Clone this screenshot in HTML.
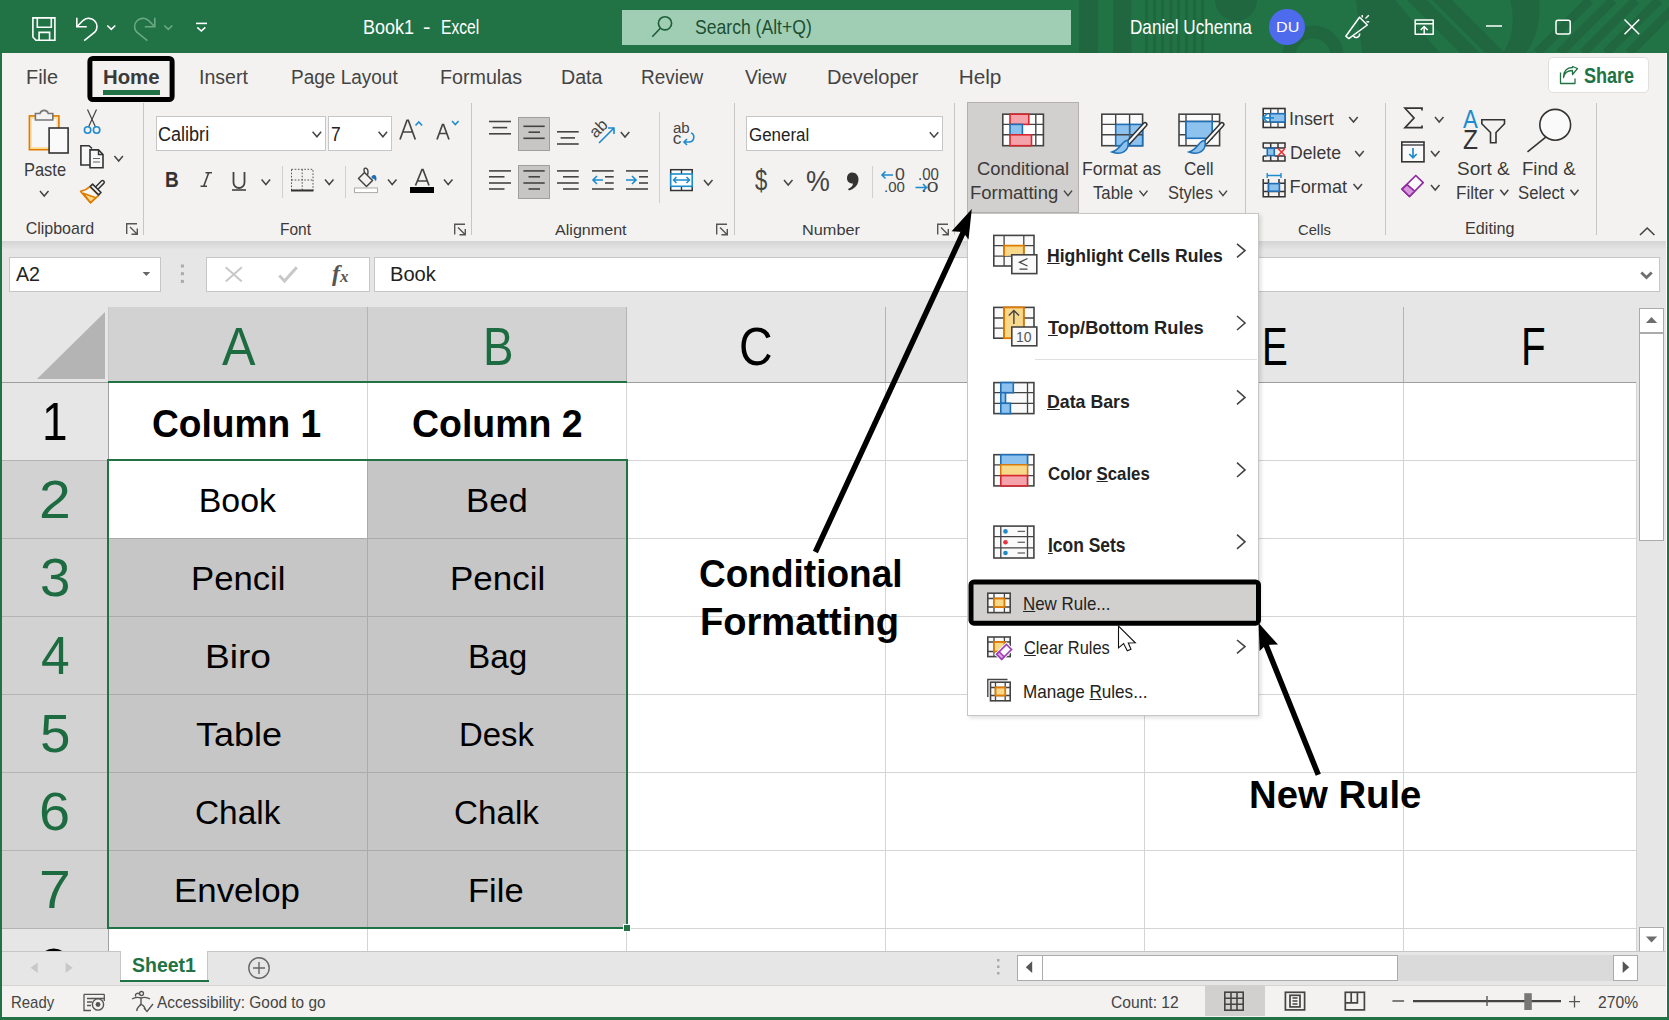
<!DOCTYPE html>
<html><head><meta charset="utf-8"><style>
html,body{margin:0;padding:0;}
body{width:1669px;height:1020px;position:relative;overflow:hidden;background:#fff;font-family:"Liberation Sans",sans-serif;}
.t{position:absolute;line-height:1;white-space:pre;transform-origin:0 0;}
svg{position:absolute;overflow:visible;}
</style></head><body>
<div style="position:absolute;left:0px;top:0px;width:1669px;height:53px;background:#217346"></div>
<div style="position:absolute;left:2px;top:53px;width:1664px;height:188px;background:#f3f2f1"></div>
<div style="position:absolute;left:2px;top:241px;width:1664px;height:9px;background:linear-gradient(#d4d4d4,#e6e6e6)"></div>
<div style="position:absolute;left:2px;top:250px;width:1664px;height:57px;background:#e6e6e6"></div>
<div style="position:absolute;left:9px;top:257px;width:152px;height:35px;background:#fff;border:1px solid #c6c6c6;box-sizing:border-box"></div>
<div style="position:absolute;left:206px;top:257px;width:164px;height:35px;background:#fff;border:1px solid #c6c6c6;box-sizing:border-box"></div>
<div style="position:absolute;left:374px;top:257px;width:1286px;height:35px;background:#fff;border:1px solid #c6c6c6;box-sizing:border-box"></div>
<div style="position:absolute;left:2px;top:307px;width:1664px;height:75px;background:#e6e6e6"></div>
<div style="position:absolute;left:108px;top:307px;width:519px;height:75px;background:#d2d2d2"></div>
<div style="position:absolute;left:2px;top:382px;width:1634px;height:569px;background:#fff"></div>
<div style="position:absolute;left:2px;top:382px;width:106px;height:569px;background:#e6e6e6"></div>
<div style="position:absolute;left:2px;top:460px;width:106px;height:468px;background:#d2d2d2"></div>
<div style="position:absolute;left:108px;top:460px;width:519px;height:468px;background:#c6c6c6"></div>
<div style="position:absolute;left:108px;top:460px;width:259px;height:78px;background:#fff"></div>
<div style="position:absolute;left:367px;top:307px;width:1px;height:75px;background:#b4b4b4"></div>
<div style="position:absolute;left:626px;top:307px;width:1px;height:75px;background:#b4b4b4"></div>
<div style="position:absolute;left:885px;top:307px;width:1px;height:75px;background:#b4b4b4"></div>
<div style="position:absolute;left:1144px;top:307px;width:1px;height:75px;background:#b4b4b4"></div>
<div style="position:absolute;left:1403px;top:307px;width:1px;height:75px;background:#b4b4b4"></div>
<div style="position:absolute;left:108px;top:307px;width:1px;height:75px;background:#c8c8c8"></div>
<div style="position:absolute;left:2px;top:382px;width:1634px;height:1px;background:#9e9e9e"></div>
<div style="position:absolute;left:108px;top:381px;width:519px;height:2px;background:#217346"></div>
<div style="position:absolute;left:367px;top:383px;width:1px;height:568px;background:#d4d4d4"></div>
<div style="position:absolute;left:626px;top:383px;width:1px;height:568px;background:#d4d4d4"></div>
<div style="position:absolute;left:885px;top:383px;width:1px;height:568px;background:#d4d4d4"></div>
<div style="position:absolute;left:1144px;top:383px;width:1px;height:568px;background:#d4d4d4"></div>
<div style="position:absolute;left:1403px;top:383px;width:1px;height:568px;background:#d4d4d4"></div>
<div style="position:absolute;left:1636px;top:382px;width:1px;height:569px;background:#d4d4d4"></div>
<div style="position:absolute;left:108px;top:383px;width:1px;height:568px;background:#a0a0a0"></div>
<div style="position:absolute;left:108px;top:460px;width:1528px;height:1px;background:#d4d4d4"></div>
<div style="position:absolute;left:2px;top:460px;width:106px;height:1px;background:#b4b4b4"></div>
<div style="position:absolute;left:108px;top:538px;width:1528px;height:1px;background:#d4d4d4"></div>
<div style="position:absolute;left:2px;top:538px;width:106px;height:1px;background:#b4b4b4"></div>
<div style="position:absolute;left:108px;top:616px;width:1528px;height:1px;background:#d4d4d4"></div>
<div style="position:absolute;left:2px;top:616px;width:106px;height:1px;background:#b4b4b4"></div>
<div style="position:absolute;left:108px;top:694px;width:1528px;height:1px;background:#d4d4d4"></div>
<div style="position:absolute;left:2px;top:694px;width:106px;height:1px;background:#b4b4b4"></div>
<div style="position:absolute;left:108px;top:772px;width:1528px;height:1px;background:#d4d4d4"></div>
<div style="position:absolute;left:2px;top:772px;width:106px;height:1px;background:#b4b4b4"></div>
<div style="position:absolute;left:108px;top:850px;width:1528px;height:1px;background:#d4d4d4"></div>
<div style="position:absolute;left:2px;top:850px;width:106px;height:1px;background:#b4b4b4"></div>
<div style="position:absolute;left:108px;top:928px;width:1528px;height:1px;background:#d4d4d4"></div>
<div style="position:absolute;left:2px;top:928px;width:106px;height:1px;background:#b4b4b4"></div>
<div style="position:absolute;left:109px;top:538px;width:517px;height:1px;background:#ababab"></div>
<div style="position:absolute;left:109px;top:616px;width:517px;height:1px;background:#ababab"></div>
<div style="position:absolute;left:109px;top:694px;width:517px;height:1px;background:#ababab"></div>
<div style="position:absolute;left:109px;top:772px;width:517px;height:1px;background:#ababab"></div>
<div style="position:absolute;left:109px;top:850px;width:517px;height:1px;background:#ababab"></div>
<div style="position:absolute;left:367px;top:461px;width:1px;height:466px;background:#ababab"></div>
<div style="position:absolute;left:107px;top:459px;width:521px;height:2px;background:#217346"></div>
<div style="position:absolute;left:107px;top:927px;width:521px;height:2px;background:#217346"></div>
<div style="position:absolute;left:107px;top:459px;width:2px;height:470px;background:#217346"></div>
<div style="position:absolute;left:626px;top:459px;width:2px;height:470px;background:#217346"></div>
<div style="position:absolute;left:623px;top:924px;width:6px;height:6px;background:#217346;border:1px solid #fff"></div>
<svg style="left:0;top:0" width="1669" height="1020"><polygon points="37,379 105,312 105,379" fill="#b4b4b4"/></svg>
<div style="position:absolute;left:1637px;top:307px;width:29px;height:644px;background:#e6e6e6"></div>
<div style="position:absolute;left:1639px;top:308px;width:25px;height:25px;background:#fff;border:1px solid #ababab;box-sizing:border-box"></div>
<div style="position:absolute;left:1639px;top:333px;width:25px;height:208px;background:#fff;border:1px solid #ababab;box-sizing:border-box"></div>
<div style="position:absolute;left:1639px;top:927px;width:25px;height:25px;background:#fff;border:1px solid #ababab;box-sizing:border-box"></div>
<div style="position:absolute;left:2px;top:951px;width:1664px;height:34px;background:#e6e6e6;border-top:1px solid #c6c6c6;box-sizing:border-box"></div>
<div style="position:absolute;left:120px;top:951px;width:88px;height:31px;background:#fff;border:1px solid #c6c6c6;border-top:none;box-sizing:border-box"></div>
<div style="position:absolute;left:120px;top:980px;width:89px;height:2px;background:#217346"></div>
<div style="position:absolute;left:2px;top:985px;width:1664px;height:32px;background:#f3f2f1;border-top:1px solid #d4d4d4;box-sizing:border-box"></div>
<div style="position:absolute;left:1017px;top:955px;width:621px;height:26px;background:#dadada"></div>
<div style="position:absolute;left:1017px;top:955px;width:26px;height:26px;background:#fff;border:1px solid #ababab;box-sizing:border-box"></div>
<div style="position:absolute;left:1042px;top:955px;width:356px;height:26px;background:#fff;border:1px solid #ababab;box-sizing:border-box"></div>
<div style="position:absolute;left:1613px;top:955px;width:25px;height:26px;background:#fff;border:1px solid #ababab;box-sizing:border-box"></div>
<div style="position:absolute;left:1205px;top:985px;width:60px;height:31px;background:#d2d0ce"></div>
<div style="position:absolute;left:0px;top:53px;width:2px;height:967px;background:#217346"></div>
<div style="position:absolute;left:1667px;top:53px;width:2px;height:967px;background:#217346"></div>
<div style="position:absolute;left:0px;top:1017px;width:1669px;height:3px;background:#217346"></div>
<svg style="left:0;top:0;overflow:hidden" width="1669" height="53"><rect x="1079" y="0" width="19" height="53" fill="#206740"/><rect x="1113" y="0" width="18.5" height="53" fill="#206740"/><rect x="1145.0" y="0" width="3" height="53" fill="#206740"/><rect x="1153.0" y="0" width="3" height="53" fill="#206740"/><rect x="1161.0" y="0" width="3" height="53" fill="#206740"/><rect x="1169.5" y="0" width="3" height="53" fill="#206740"/><rect x="1177.0" y="0" width="3" height="53" fill="#206740"/><rect x="1185.0" y="0" width="3" height="53" fill="#206740"/><rect x="1193.0" y="0" width="3" height="53" fill="#206740"/><rect x="1201.0" y="0" width="3" height="53" fill="#206740"/><path d="M1215,0 A21,21 0 0 0 1257,0 Z" fill="#206740"/><circle cx="1313" cy="56" r="24" fill="none" stroke="#206740" stroke-width="13"/><g stroke="#206740" stroke-width="14"><line x1="1412" y1="-5" x2="1475" y2="58"/><line x1="1437" y1="-5" x2="1500" y2="58"/></g><path d="M1356,0 H1395 L1440,53 H1362 Z" fill="#206740"/><g stroke="#206740" stroke-width="9"><line x1="1590" y1="0" x2="1537" y2="53"/><line x1="1613" y1="0" x2="1560" y2="53"/><line x1="1636" y1="0" x2="1583" y2="53"/><line x1="1659" y1="0" x2="1606" y2="53"/><line x1="1682" y1="0" x2="1629" y2="53"/></g><path d="M1510,0 H1539 C1541,18 1537,38 1526,53 H1503 C1513,38 1515,18 1510,0 Z" fill="#206740"/></svg>
<div style="position:absolute;left:622px;top:10px;width:449px;height:35px;background:#a0ceb4"></div>
<svg style="left:0;top:0" width="1" height="1"><g fill="none" stroke="#1d5e39" stroke-width="1.6"><circle cx="665" cy="23.3" r="6.6"/><line x1="660.3" y1="28.3" x2="652.3" y2="36.8"/></g></svg>
<svg style="left:0;top:0" width="1" height="1"><g fill="none" stroke="#fff" stroke-width="1.6" stroke-linejoin="miter"><path d="M32.9,17.9 H54.9 V40.2 H35.9 L32.9,37 Z"/><path d="M37.3,17.9 V27.2 H51.3 V17.9"/><path d="M39.1,40.2 V32.4 H49.6 V40.2"/><path d="M76.8,17.7 V26.8 H86.8"/><path d="M77.3,26.3 L83.3,20.3 A8.3,8.3 0 0 1 95,32 L84.2,40.6"/><path d="M107.3,25.5 L111.3,29.3 L115.3,25.5"/><path d="M196,23.4 H207"/><path d="M197.3,27.3 L201.3,31 L205.3,27.3"/></g><g fill="none" stroke="#6aa985" stroke-width="1.6"><path d="M154.8,17.7 V26.8 H144.8"/><path d="M154.3,26.3 L148.3,20.3 A8.3,8.3 0 0 0 136.6,32 L147.4,40.6"/><path d="M164.3,25.5 L168.3,29.3 L172.3,25.5"/></g></svg>
<svg style="left:0;top:0" width="1" height="1"><circle cx="1287" cy="27" r="18" fill="#4f6bed"/></svg>
<svg style="left:0;top:0" width="1" height="1"><g fill="none" stroke="#fff" stroke-width="1.5" stroke-linejoin="round"><path d="M1345.8,36.2 L1359.5,17.2 L1367.3,25 L1348.8,38.6 Z"/><path d="M1353.5,36 A3.3,3.3 0 0 0 1359.5,33.5"/><path d="M1362.2,15 V17.5"/><path d="M1365.5,18.5 L1368.8,15.3"/><path d="M1366.5,21.8 H1369.2"/><rect x="1415.2" y="20" width="18" height="14.2"/><line x1="1415.2" y1="23.8" x2="1433.2" y2="23.8"/><path d="M1424.2,34 V27"/><path d="M1420.7,30 L1424.2,26.5 L1427.7,30"/><line x1="1486" y1="26" x2="1502" y2="26"/><rect x="1556" y="20.2" width="14.2" height="13.8" rx="2"/><path d="M1624.5,19.5 L1639.2,34.3 M1639.2,19.5 L1624.5,34.3"/></g></svg>
<svg style="left:0;top:0" width="1" height="1"><path fill-rule="evenodd" fill="#000" d="M92.9,56.0 H169.1 A5.5,5.5 0 0 1 174.6,61.5 V96.5 A5.5,5.5 0 0 1 169.1,102.0 H92.9 A5.5,5.5 0 0 1 87.4,96.5 V61.5 A5.5,5.5 0 0 1 92.9,56.0 Z M92.4,61.0 H169.6 V97.0 H92.4 Z"/></svg>
<div style="position:absolute;left:103px;top:90px;width:57px;height:5px;background:#217346"></div>
<div style="position:absolute;left:1548px;top:57px;width:101px;height:36px;background:#fff;border:1px solid #e1dfdd;border-radius:5px;box-sizing:border-box"></div>
<svg style="left:0;top:0" width="1" height="1"><g fill="none" stroke="#217346" stroke-width="1.3" stroke-linejoin="round"><path d="M1560.5,72.5 V83.5 H1575 V78.5"/><path d="M1563.5,77.5 C1564.5,72.5 1568,70.5 1572.5,70.5 V74.5 L1577.5,68.5 L1572.5,66.5 V67.5 C1567,67.5 1563.7,71 1563.5,77.5 Z"/></g></svg>
<div style="position:absolute;left:143px;top:103px;width:1px;height:132px;background:#c8c6c4"></div>
<div style="position:absolute;left:471px;top:103px;width:1px;height:132px;background:#c8c6c4"></div>
<div style="position:absolute;left:734px;top:103px;width:1px;height:132px;background:#c8c6c4"></div>
<div style="position:absolute;left:954px;top:103px;width:1px;height:132px;background:#c8c6c4"></div>
<div style="position:absolute;left:1245px;top:103px;width:1px;height:132px;background:#c8c6c4"></div>
<div style="position:absolute;left:1385px;top:103px;width:1px;height:132px;background:#c8c6c4"></div>
<div style="position:absolute;left:1596px;top:103px;width:1px;height:132px;background:#c8c6c4"></div>
<div style="position:absolute;left:282px;top:166px;width:1px;height:32px;background:#d2d0ce"></div>
<div style="position:absolute;left:345px;top:166px;width:1px;height:32px;background:#d2d0ce"></div>
<div style="position:absolute;left:659px;top:112px;width:1px;height:91px;background:#d2d0ce"></div>
<div style="position:absolute;left:872px;top:166px;width:1px;height:32px;background:#d2d0ce"></div>
<svg style="left:0;top:0" width="1" height="1"><g fill="none" stroke="#555" stroke-width="1.4"><path d="M126.7,234.0 V223.7 H137.0"/><path d="M130.0,227.0 L136.5,233.5 M131.5,234.3 H137.3 V228.5"/></g><g fill="none" stroke="#555" stroke-width="1.4"><path d="M454.7,234.5 V224.2 H465.0"/><path d="M458.0,227.5 L464.5,234.0 M459.5,234.8 H465.3 V229.0"/></g><g fill="none" stroke="#555" stroke-width="1.4"><path d="M716.7,234.5 V224.2 H727.0"/><path d="M720.0,227.5 L726.5,234.0 M721.5,234.8 H727.3 V229.0"/></g><g fill="none" stroke="#555" stroke-width="1.4"><path d="M937.7,234.5 V224.2 H948.0"/><path d="M941.0,227.5 L947.5,234.0 M942.5,234.8 H948.3 V229.0"/></g></svg>
<svg style="left:0;top:0" width="1" height="1"><path d="M1640,235 L1647.2,228 L1654.4,235" fill="none" stroke="#444" stroke-width="1.6"/></svg>
<svg style="left:0;top:0" width="1" height="1"><rect x="29.4" y="115.9" width="29.5" height="33.8" fill="#fbe3a6" stroke="#e07b00" stroke-width="1.6"/><rect x="32" y="119" width="24.5" height="28" fill="#f7f7f7"/><path d="M35.4,120 V113.5 H40 A4.3,4.3 0 0 1 48.3,113.5 H52.8 V120 Z" fill="#f3f3f3" stroke="#777" stroke-width="1.6"/><rect x="49.1" y="128" width="19" height="25" fill="#fafafa" stroke="#333" stroke-width="1.6"/><path d="M40.0,191.1 L44.2,196.1 L48.5,191.1" fill="none" stroke="#444" stroke-width="1.5"/><g fill="none" stroke="#444" stroke-width="1.2"><path d="M87.5,109.5 L95.5,127"/><path d="M96.5,109.5 L88.5,127"/></g><g fill="none" stroke="#1e8bcd" stroke-width="1.6"><circle cx="87.6" cy="130" r="3.2"/><circle cx="96.6" cy="130" r="3.2"/></g><path d="M90.5,165 H80.9 V145.7 H89 L92,148.5" fill="#f7f7f7" stroke="#333" stroke-width="1.6"/><path d="M90,149.9 H98.5 L103,154.5 V167.8 H90 Z" fill="#f7f7f7" stroke="#333" stroke-width="1.6"/><path d="M98.5,150 V154.5 H103" fill="none" stroke="#333" stroke-width="1.4"/><path d="M93,158.5 H100 M93,162 H100" stroke="#666" stroke-width="1.2"/><path d="M114.4,156.0 L118.7,161.0 L122.9,156.0" fill="none" stroke="#444" stroke-width="1.5"/><path d="M80.6,191.4 Q86.5,190 89.9,186.6 L98.6,195.3 L90.4,202.8 Z" fill="#f7f7f7" stroke="#e07b00" stroke-width="1.6" stroke-linejoin="round"/><path d="M83.3,193.2 L95.8,197.8 L90.4,202.6 Z" fill="#f8d98b" stroke="#e07b00" stroke-width="1.5" stroke-linejoin="round"/><path d="M96.2,188.6 L102.6,182.2" stroke="#333" stroke-width="4.8" stroke-linecap="round"/><path d="M96.2,188.6 L102.6,182.2" stroke="#f7f7f7" stroke-width="1.8" stroke-linecap="round"/><path d="M90.2,186.5 L92.6,184.1 L101,192.5 L98.6,194.9 Z" fill="#f7f7f7" stroke="#333" stroke-width="1.6" stroke-linejoin="round"/></svg>
<div style="position:absolute;left:156px;top:116px;width:170px;height:35px;background:#fff;border:1px solid #c6c6c6;box-sizing:border-box"></div>
<div style="position:absolute;left:328px;top:116px;width:64px;height:35px;background:#fff;border:1px solid #c6c6c6;box-sizing:border-box"></div>
<div style="position:absolute;left:746px;top:116px;width:197px;height:35px;background:#fff;border:1px solid #c6c6c6;box-sizing:border-box"></div>
<svg style="left:0;top:0" width="1" height="1"><path d="M312.6,131.8 L316.9,136.8 L321.1,131.8" fill="none" stroke="#444" stroke-width="1.5"/><path d="M378.6,131.8 L382.9,136.8 L387.1,131.8" fill="none" stroke="#444" stroke-width="1.5"/><path d="M929.8,132.2 L934.0,137.2 L938.3,132.2" fill="none" stroke="#444" stroke-width="1.5"/><g fill="none" stroke="#444" stroke-width="1.7"><path d="M400,139.5 L407,120.3 H408.3 L415.3,139.5 M403,132 H412.5"/><path d="M437,139.5 L442.5,124.5 H443.5 L449,139.5 M439.3,133.5 H446.8"/></g><path d="M415.5,125.5 L418.8,122 L422.1,125.5" fill="none" stroke="#1e8bcd" stroke-width="1.6"/><path d="M452,121 L455.3,124.5 L458.6,121" fill="none" stroke="#1e8bcd" stroke-width="1.6"/></svg>
<div class="t" style="left:165.16px;top:168.54px;font-size:21.80px;color:#333;font-weight:700;transform:scaleX(0.8722);">B</div>
<svg style="left:0;top:0" width="1" height="1"><path d="M205.5,172.8 H212 M200.5,186.3 H207 M208.7,172.8 L203.7,186.3" fill="none" stroke="#444" stroke-width="1.6"/></svg>
<svg style="left:0;top:0" width="1" height="1"><path d="M233.5,172 V182.5 A5.5,5.5 0 0 0 244.5,182.5 V172" fill="none" stroke="#444" stroke-width="1.8"/><line x1="232" y1="190" x2="246" y2="190" stroke="#444" stroke-width="1.6"/><path d="M261.6,179.5 L265.9,184.5 L270.1,179.5" fill="none" stroke="#444" stroke-width="1.5"/><path d="M325.0,179.5 L329.2,184.5 L333.5,179.5" fill="none" stroke="#444" stroke-width="1.5"/><path d="M388.0,179.5 L392.2,184.5 L396.5,179.5" fill="none" stroke="#444" stroke-width="1.5"/><path d="M444.0,179.5 L448.2,184.5 L452.5,179.5" fill="none" stroke="#444" stroke-width="1.5"/><g fill="none" stroke="#555" stroke-width="1" stroke-dasharray="1.6,1.6"><rect x="291.5" y="169.3" width="21.5" height="21"/><line x1="302.2" y1="169.3" x2="302.2" y2="190"/><line x1="291.5" y1="180" x2="313" y2="180"/></g><line x1="291" y1="190.5" x2="313.5" y2="190.5" stroke="#333" stroke-width="2"/><path d="M358.5,178.5 L364.5,172.5 L372.5,180.5 L366.5,186.5 Z" fill="none" stroke="#444" stroke-width="1.5" stroke-linejoin="round"/><path d="M364.5,172.5 C363.5,169.5 364,167.8 366,168.2 C368,168.6 368.5,171.5 367.5,175" fill="none" stroke="#444" stroke-width="1.4"/><path d="M371.5,176.5 C373.5,174 376.5,174.5 376.5,178.5 L376,181.5 C375,179.5 373.5,178.3 371.8,178.5 Z" fill="#1e6fb5"/><rect x="354.5" y="188" width="23" height="4.6" fill="#fff" stroke="#aaa" stroke-width="1"/><path d="M415.5,185.5 L422,169.5 H423 L429,185.5 M417.8,181 H426.8" fill="none" stroke="#444" stroke-width="1.7"/><rect x="410" y="187" width="24" height="6" fill="#000"/></svg>
<div style="position:absolute;left:518px;top:117px;width:32px;height:34px;background:#c8c6c4;border:1px solid #a19f9d;box-sizing:border-box"></div>
<div style="position:absolute;left:518px;top:165px;width:32px;height:34px;background:#c8c6c4;border:1px solid #a19f9d;box-sizing:border-box"></div>
<svg style="left:0;top:0" width="1" height="1"><line x1="489.0" y1="121.5" x2="511.0" y2="121.5" stroke="#444" stroke-width="1.6"/><line x1="492.6" y1="127.6" x2="507.2" y2="127.6" stroke="#444" stroke-width="1.6"/><line x1="489.0" y1="133.8" x2="511.0" y2="133.8" stroke="#444" stroke-width="1.6"/><line x1="523.4" y1="126.3" x2="544.7" y2="126.3" stroke="#444" stroke-width="1.6"/><line x1="528.5" y1="132.2" x2="540.0" y2="132.2" stroke="#444" stroke-width="1.6"/><line x1="523.4" y1="138.3" x2="544.7" y2="138.3" stroke="#444" stroke-width="1.6"/><line x1="557.0" y1="131.8" x2="578.7" y2="131.8" stroke="#444" stroke-width="1.6"/><line x1="560.6" y1="137.9" x2="575.0" y2="137.9" stroke="#444" stroke-width="1.6"/><line x1="557.0" y1="144.0" x2="578.7" y2="144.0" stroke="#444" stroke-width="1.6"/><line x1="489.0" y1="170.9" x2="511.0" y2="170.9" stroke="#444" stroke-width="1.6"/><line x1="489.0" y1="176.8" x2="504.5" y2="176.8" stroke="#444" stroke-width="1.6"/><line x1="489.0" y1="183.0" x2="511.0" y2="183.0" stroke="#444" stroke-width="1.6"/><line x1="489.0" y1="189.0" x2="504.5" y2="189.0" stroke="#444" stroke-width="1.6"/><line x1="523.4" y1="170.9" x2="544.7" y2="170.9" stroke="#444" stroke-width="1.6"/><line x1="528.5" y1="176.8" x2="540.0" y2="176.8" stroke="#444" stroke-width="1.6"/><line x1="523.4" y1="183.0" x2="544.7" y2="183.0" stroke="#444" stroke-width="1.6"/><line x1="528.5" y1="189.0" x2="540.0" y2="189.0" stroke="#444" stroke-width="1.6"/><line x1="557.0" y1="170.9" x2="578.7" y2="170.9" stroke="#444" stroke-width="1.6"/><line x1="563.0" y1="176.8" x2="578.7" y2="176.8" stroke="#444" stroke-width="1.6"/><line x1="557.0" y1="183.0" x2="578.7" y2="183.0" stroke="#444" stroke-width="1.6"/><line x1="563.0" y1="189.0" x2="578.7" y2="189.0" stroke="#444" stroke-width="1.6"/><line x1="592.0" y1="170.9" x2="613.7" y2="170.9" stroke="#444" stroke-width="1.6"/><line x1="605.0" y1="176.8" x2="613.7" y2="176.8" stroke="#444" stroke-width="1.6"/><line x1="605.0" y1="183.0" x2="613.7" y2="183.0" stroke="#444" stroke-width="1.6"/><line x1="592.0" y1="189.0" x2="613.7" y2="189.0" stroke="#444" stroke-width="1.6"/><path d="M603,180 H593 M597,176 L593,180 L597,184" fill="none" stroke="#1e8bcd" stroke-width="1.6"/><line x1="626.0" y1="170.9" x2="648.0" y2="170.9" stroke="#444" stroke-width="1.6"/><line x1="639.0" y1="176.8" x2="648.0" y2="176.8" stroke="#444" stroke-width="1.6"/><line x1="639.0" y1="183.0" x2="648.0" y2="183.0" stroke="#444" stroke-width="1.6"/><line x1="626.0" y1="189.0" x2="648.0" y2="189.0" stroke="#444" stroke-width="1.6"/><path d="M626,180 H636 M632,176 L636,180 L632,184" fill="none" stroke="#1e8bcd" stroke-width="1.6"/><path d="M599,143 L614,128 M608,128 H614 V134" fill="none" stroke="#1e8bcd" stroke-width="1.6"/><path d="M620.8,132.0 L625.0,137.0 L629.3,132.0" fill="none" stroke="#444" stroke-width="1.5"/><path d="M691,133 C695,134 695,142 689,142 H684 M687,139 L684,142 L687,145" fill="none" stroke="#1e8bcd" stroke-width="1.6"/><rect x="670.7" y="169.7" width="21.5" height="20.8" fill="#fff" stroke="#333" stroke-width="1.5"/><line x1="681.5" y1="169.7" x2="681.5" y2="190.5" stroke="#333" stroke-width="1.4"/><rect x="670.7" y="174" width="21.5" height="12.3" fill="#fff" stroke="#1e8bcd" stroke-width="1.6"/><path d="M673.5,180 H689.5 M676.5,177 L673.5,180 L676.5,183 M686.5,177 L689.5,180 L686.5,183" fill="none" stroke="#1e8bcd" stroke-width="1.5"/><path d="M704.0,180.0 L708.2,185.0 L712.5,180.0" fill="none" stroke="#444" stroke-width="1.5"/></svg>
<div class="t" style="left:588.5px;top:120px;font-size:16.5px;color:#444;transform:rotate(-45deg);transform-origin:50% 50%">ab</div>
<div class="t" style="left:672.90px;top:120.80px;font-size:14.83px;color:#444;font-weight:400;transform:scaleX(1.0147);">ab</div>
<div class="t" style="left:672.81px;top:130.20px;font-size:17.27px;color:#444;font-weight:400;">c</div>
<div class="t" style="left:754.78px;top:165.88px;font-size:29.26px;color:#444;font-weight:400;transform:scaleX(0.7545);">$</div>
<div class="t" style="left:806.06px;top:165.99px;font-size:29.71px;color:#444;font-weight:400;transform:scaleX(0.9029);">%</div>
<svg style="left:0;top:0" width="1" height="1"><path d="M784.0,180.0 L788.2,185.0 L792.5,180.0" fill="none" stroke="#444" stroke-width="1.5"/><path d="M852,172.6 C856.5,172.6 858.5,176 858.5,179.5 C858.5,184.5 855,188.5 849,190.6 L848,189 C851.5,187.5 853,185.5 853,183.5 C849.5,183.5 847,181.5 847,178.2 C847,175 849.2,172.6 852,172.6 Z" fill="#333"/><path d="M893,175 H882 M885.5,171.5 L882,175 L885.5,178.5" fill="none" stroke="#1e8bcd" stroke-width="1.6"/><path d="M915.5,187.5 H926.5 M923,184 L926.5,187.5 L923,191" fill="none" stroke="#1e8bcd" stroke-width="1.6"/></svg>
<div class="t" style="left:894.79px;top:166.99px;font-size:15.77px;color:#444;font-weight:400;transform:scaleX(1.1226);">0</div>
<div class="t" style="left:883.65px;top:178.73px;font-size:15.49px;color:#444;font-weight:400;transform:scaleX(0.9695);">.00</div>
<div class="t" style="left:917.65px;top:166.99px;font-size:15.77px;color:#444;font-weight:400;transform:scaleX(0.9521);">.00</div>
<div class="t" style="left:921.10px;top:178.73px;font-size:15.49px;color:#444;font-weight:400;transform:scaleX(1.3636);">.0</div>
<div style="position:absolute;left:967px;top:102px;width:112px;height:111px;background:#d2d0ce;border:1px solid #b3b0ad;box-sizing:border-box"></div>
<svg style="left:0;top:0" width="1" height="1"><rect x="1002.8" y="114.2" width="40.6" height="31.5" fill="#fff" stroke="#444" stroke-width="1.6"/><path d="M1002.8,124.4 H1043.4 M1002.8,134.8 H1043.4 M1035.8,114.2 V145.7" stroke="#444" stroke-width="1.4"/><rect x="1010" y="114.2" width="18.8" height="10.2" fill="#f4a3ab" stroke="#d8262e" stroke-width="1.6"/><rect x="1010" y="124.4" width="12.4" height="10.4" fill="#8ec2ee" stroke="#1e6fb5" stroke-width="1.6"/><rect x="1010" y="134.8" width="21.5" height="10.9" fill="#f4a3ab" stroke="#d8262e" stroke-width="1.6"/><rect x="1101.8" y="114.2" width="40.8" height="31.5" fill="#fafafa" stroke="#444" stroke-width="1.6"/><rect x="1115.7" y="124.4" width="26.9" height="21.3" fill="#8ec2ee" stroke="#1e6fb5" stroke-width="1.6"/><path d="M1101.8,124.4 H1115.7 M1101.8,134.8 H1142.6 M1115.7,114.2 V124.4 M1129.6,114.2 V145.7" stroke="#444" stroke-width="1.4"/><path d="M1129.6,124.4 V145.7" stroke="#1e6fb5" stroke-width="1.4"/><path d="M1145.0,124.5 L1129.0,142.0" stroke="#333" stroke-width="5.2" stroke-linecap="round"/><path d="M1145.0,124.5 L1129.0,142.0" stroke="#fafafa" stroke-width="2.2" stroke-linecap="round"/><path d="M1128.0,140.5 C1122.0,139.5 1122.0,148.5 1112.0,152.0 C1121.0,155.5 1130.0,151.5 1128.0,140.5 Z" fill="#8ec2ee" stroke="#1e6fb5" stroke-width="1.6"/><rect x="1179" y="114.2" width="40.6" height="31.5" fill="#fafafa" stroke="#444" stroke-width="1.6"/><path d="M1179,134.8 H1186 M1179,121.5 H1219.6 M1186,114.2 V145.7 M1212.2,114.2 V121.5" stroke="#444" stroke-width="1.4"/><rect x="1186" y="121.5" width="26.2" height="16.8" fill="#8ec2ee" stroke="#1e6fb5" stroke-width="1.6"/><path d="M1222.0,124.5 L1206.0,142.0" stroke="#333" stroke-width="5.2" stroke-linecap="round"/><path d="M1222.0,124.5 L1206.0,142.0" stroke="#fafafa" stroke-width="2.2" stroke-linecap="round"/><path d="M1205.0,140.5 C1199.0,139.5 1199.0,148.5 1189.0,152.0 C1198.0,155.5 1207.0,151.5 1205.0,140.5 Z" fill="#8ec2ee" stroke="#1e6fb5" stroke-width="1.6"/><path d="M1064.0,190.6 L1068.0,195.6 L1072.0,190.6" fill="none" stroke="#444" stroke-width="1.5"/><path d="M1139.5,190.6 L1143.5,195.6 L1147.5,190.6" fill="none" stroke="#444" stroke-width="1.5"/><path d="M1219.0,190.6 L1223.0,195.6 L1227.0,190.6" fill="none" stroke="#444" stroke-width="1.5"/><rect x="1263.2" y="108.5" width="21.8" height="19" fill="#fafafa" stroke="#333" stroke-width="1.6"/><path d="M1263.2,113.7 H1285 M1263.2,122 H1285 M1270.7,108.5 V127.5 M1278,108.5 V127.5" stroke="#444" stroke-width="1.3"/><rect x="1270" y="113.7" width="15" height="8.3" fill="#8ec2ee" stroke="#1e6fb5" stroke-width="1.6"/><path d="M1274,117.8 H1263 M1267.3,113.5 L1263,117.8 L1267.3,122.1" fill="none" stroke="#1e8bcd" stroke-width="1.7"/><path d="M1263.2,148 V143 H1285 V148 M1263.2,156 V161 H1285 V156 M1263.2,148 H1285 M1263.2,156 H1266.8 M1270.7,143 V148 M1278,143 V148 M1270.7,156 V161 M1278,156 V161 M1274.6,156 H1285" fill="none" stroke="#333" stroke-width="1.5"/><rect x="1267.3" y="148.3" width="7" height="7.3" fill="#8ec2ee" stroke="#1e6fb5" stroke-width="1.6"/><path d="M1278,148.5 L1285,155.8 M1285,148.5 L1278,155.8" stroke="#e8333a" stroke-width="1.6"/><path d="M1263.2,179 V196.8 H1285 V179 M1263.2,183.3 H1268 M1279.5,183.3 H1285 M1263.2,191.4 H1285 M1268.5,179 V196.8 M1279,179 V196.8" fill="none" stroke="#333" stroke-width="1.5"/><rect x="1268.6" y="183.6" width="10.8" height="7.6" fill="#8ec2ee" stroke="#1e6fb5" stroke-width="1.6"/><path d="M1267.2,175.5 H1281 M1267.2,173 V178 M1281,173 V178" fill="none" stroke="#1e8bcd" stroke-width="1.4"/><path d="M1349.2,117.0 L1353.5,122.0 L1357.7,117.0" fill="none" stroke="#444" stroke-width="1.5"/><path d="M1355.2,151.0 L1359.5,156.0 L1363.7,151.0" fill="none" stroke="#444" stroke-width="1.5"/><path d="M1353.5,184.0 L1357.8,189.0 L1362.0,184.0" fill="none" stroke="#444" stroke-width="1.5"/><path d="M1422,110.5 V108.2 H1405 L1414,118 L1405,127.7 H1422 V125.5" fill="none" stroke="#333" stroke-width="1.7"/><rect x="1401.8" y="142" width="22.2" height="19.8" fill="#fafafa" stroke="#333" stroke-width="1.6"/><path d="M1401.8,145 H1424" stroke="#333" stroke-width="1.3"/><path d="M1413,148 V157.5 M1409.3,154 L1413,157.7 L1416.7,154" fill="none" stroke="#1e8bcd" stroke-width="1.7"/><path d="M1415.8,175.5 L1423.2,182.7 L1409.5,196.5 L1402,189.1 Z" fill="#fafafa" stroke="#8e2a9e" stroke-width="1.7" stroke-linejoin="round"/><path d="M1402,189.1 L1407.1,184.6 L1414.6,191.2 L1409.5,196.5 Z" fill="#d896dc" stroke="#8e2a9e" stroke-width="1.6" stroke-linejoin="round"/><path d="M1435.0,117.0 L1439.2,122.0 L1443.5,117.0" fill="none" stroke="#444" stroke-width="1.5"/><path d="M1431.0,151.0 L1435.2,156.0 L1439.5,151.0" fill="none" stroke="#444" stroke-width="1.5"/><path d="M1431.0,185.0 L1435.2,190.0 L1439.5,185.0" fill="none" stroke="#444" stroke-width="1.5"/><path d="M1481.8,119.8 H1504.5 V123.7 L1496,132.5 V142.8 H1490.5 V132.5 L1481.8,123.7 Z" fill="none" stroke="#333" stroke-width="1.6"/><path d="M1547,136.2 L1527.5,151.8" stroke="#333" stroke-width="1.6"/><circle cx="1555.2" cy="124.8" r="15.4" fill="#fafafa" stroke="#333" stroke-width="1.6"/><path d="M1500.3,189.8 L1504.3,194.8 L1508.3,189.8" fill="none" stroke="#444" stroke-width="1.5"/><path d="M1570.5,189.8 L1574.5,194.8 L1578.5,189.8" fill="none" stroke="#444" stroke-width="1.5"/></svg>
<div class="t" style="left:1463.00px;top:105.91px;font-size:26.09px;color:#1e8bcd;font-weight:400;transform:scaleX(0.8531);">A</div>
<div class="t" style="left:1462.76px;top:126.80px;font-size:26.81px;color:#333;font-weight:400;transform:scaleX(0.9155);">Z</div>
<svg style="left:0;top:0" width="1" height="1"><path d="M142.6,272 H150.2 L146.4,276 Z" fill="#666"/><rect x="180.9" y="264.5" width="3" height="3" fill="#aaa"/><rect x="180.9" y="272.2" width="3" height="3" fill="#aaa"/><rect x="180.9" y="279.9" width="3" height="3" fill="#aaa"/><path d="M225.7,267.2 L241.8,281.5 M241.8,267.2 L225.7,281.5" stroke="#c8c8c8" stroke-width="2"/><path d="M279.3,275.5 L284.5,281 L296.8,267.3" fill="none" stroke="#c8c8c8" stroke-width="3"/><path d="M1641.3,272.5 L1646.5,277.6 L1651.7,272.5" fill="none" stroke="#6e6e6e" stroke-width="2.8"/><path d="M1645.9,323 L1651.5,317 L1657.2,323 Z" fill="#6e6e6e"/><path d="M1645.9,936.5 L1651.5,942.5 L1657.2,936.5 Z" fill="#6e6e6e"/><path d="M1032.2,961.2 L1025.8,967.2 L1032.2,973.1 Z" fill="#555"/><path d="M1622.7,961.2 L1629.2,967.2 L1622.7,973.1 Z" fill="#555"/><rect x="997" y="959" width="2.5" height="2.5" fill="#aaa"/><rect x="997" y="965.5" width="2.5" height="2.5" fill="#aaa"/><rect x="997" y="972" width="2.5" height="2.5" fill="#aaa"/><path d="M37.7,962.4 L30.6,967.7 L37.7,973 Z" fill="#c8c8c8"/><path d="M65.6,962.4 L72.7,967.7 L65.6,973 Z" fill="#c8c8c8"/><circle cx="259" cy="968" r="10.2" fill="none" stroke="#666" stroke-width="1.4"/><path d="M259,962 V974 M253,968 H265" stroke="#666" stroke-width="1.4"/><path d="M84,994.3 H104.3 M84,994.3 V1010.5 H91 M104.3,994.3 V1001 M87,998.5 H104.3 M87,1002 H92 M87,1005.5 H91" fill="none" stroke="#555" stroke-width="1.3"/><circle cx="98" cy="1004.5" r="5.6" fill="#f3f2f1" stroke="#555" stroke-width="1.4"/><circle cx="98" cy="1004.5" r="2.4" fill="#555"/><path d="M136,996.5 C134,994 138,992 140,994.5 M132,999 C135,997 138,997 141,998 C144,997 147,997 150,999 M141,998 V1004 C139,1007 136,1008 137,1011 M141,1004 C143,1006 145,1006 145,1009" fill="none" stroke="#555" stroke-width="1.4"/><circle cx="141.5" cy="993.5" r="2" fill="none" stroke="#555" stroke-width="1.3"/><path d="M144,1008 L147,1011.5 L153,1004" fill="none" stroke="#555" stroke-width="1.4"/><g fill="none" stroke="#444" stroke-width="1.6"><rect x="1224.8" y="992.2" width="18.4" height="18"/><path d="M1231,992.2 V1010.2 M1237,992.2 V1010.2 M1224.8,998.2 H1243.2 M1224.8,1004.2 H1243.2"/></g><g fill="none" stroke="#444" stroke-width="1.7"><rect x="1285.4" y="992.3" width="19.2" height="17.6"/><rect x="1290" y="995.3" width="10" height="11.6"/><path d="M1292.5,998 H1297.5 M1292.5,1001 H1297.5 M1292.5,1004 H1297.5"/></g><g fill="none" stroke="#444" stroke-width="1.7"><rect x="1345.3" y="992.3" width="19.1" height="17.6"/><path d="M1351.2,992.3 V1002.8 M1357.4,992.3 V1002.8 H1345.3"/></g><path d="M1392.4,1001 H1404.1 M1569.1,1001.7 H1580 M1574.5,995.8 V1007.6" stroke="#555" stroke-width="1.3"/><path d="M1413,1001.2 H1561" stroke="#444" stroke-width="2.2"/><path d="M1487,996 V1006" stroke="#555" stroke-width="1.4"/><rect x="1524.3" y="993.2" width="7.5" height="16.8" fill="#777"/></svg>
<div class="t" style="left:332px;top:261px;font-size:24px;font-style:italic;font-weight:700;color:#555;font-family:'Liberation Serif',serif">f</div>
<div class="t" style="left:340px;top:268px;font-size:17px;font-style:italic;font-weight:700;color:#555;font-family:'Liberation Serif',serif">x</div>
<div class="t" style="left:362.56px;top:17.71px;font-size:19.48px;color:#ffffff;font-weight:400;transform:scaleX(0.9245);">Book1</div>
<div class="t" style="left:423.49px;top:17.71px;font-size:19.48px;color:#ffffff;font-weight:400;transform:scaleX(1.1526);">-</div>
<div class="t" style="left:441.05px;top:17.71px;font-size:19.48px;color:#ffffff;font-weight:400;transform:scaleX(0.8014);">Excel</div>
<div class="t" style="left:695.21px;top:17.71px;font-size:19.48px;color:#1d4e33;font-weight:400;transform:scaleX(0.9035);">Search (Alt+Q)</div>
<div class="t" style="left:1130.43px;top:17.71px;font-size:19.48px;color:#ffffff;font-weight:400;transform:scaleX(0.8794);">Daniel Uchenna</div>
<div class="t" style="left:1275.51px;top:20.49px;font-size:14.54px;color:#ffffff;font-weight:400;transform:scaleX(1.1083);">DU</div>
<div class="t" style="left:25.91px;top:66.70px;font-size:20.79px;color:#444444;font-weight:400;transform:scaleX(0.9557);">File</div>
<div class="t" style="left:198.94px;top:66.70px;font-size:20.79px;color:#444444;font-weight:400;transform:scaleX(0.9402);">Insert</div>
<div class="t" style="left:291.08px;top:66.70px;font-size:20.79px;color:#444444;font-weight:400;transform:scaleX(0.9144);">Page Layout</div>
<div class="t" style="left:439.73px;top:66.70px;font-size:20.79px;color:#444444;font-weight:400;transform:scaleX(0.9468);">Formulas</div>
<div class="t" style="left:561.13px;top:66.70px;font-size:20.79px;color:#444444;font-weight:400;transform:scaleX(0.9456);">Data</div>
<div class="t" style="left:641.49px;top:66.70px;font-size:20.79px;color:#444444;font-weight:400;transform:scaleX(0.9111);">Review</div>
<div class="t" style="left:744.90px;top:66.70px;font-size:20.79px;color:#444444;font-weight:400;transform:scaleX(0.9308);">View</div>
<div class="t" style="left:826.89px;top:66.70px;font-size:20.79px;color:#444444;font-weight:400;transform:scaleX(0.9655);">Developer</div>
<div class="t" style="left:958.63px;top:66.70px;font-size:20.79px;color:#444444;font-weight:400;">Help</div>
<div class="t" style="left:102.68px;top:66.70px;font-size:20.79px;color:#3b3a39;font-weight:700;transform:scaleX(0.9784);">Home</div>
<div class="t" style="left:1584.46px;top:65.24px;font-size:21.80px;color:#217346;font-weight:700;transform:scaleX(0.8278);">Share</div>
<div class="t" style="left:23.68px;top:161.09px;font-size:18.31px;color:#3b3a39;font-weight:400;transform:scaleX(0.8988);">Paste</div>
<div class="t" style="left:25.70px;top:221.16px;font-size:15.99px;color:#3b3a39;font-weight:400;">Clipboard</div>
<div class="t" style="left:158.10px;top:124.63px;font-size:19.33px;color:#222;font-weight:400;transform:scaleX(0.9336);">Calibri</div>
<div class="t" style="left:330.93px;top:124.63px;font-size:19.33px;color:#222;font-weight:400;transform:scaleX(0.8981);">7</div>
<div class="t" style="left:279.76px;top:221.51px;font-size:15.70px;color:#3b3a39;font-weight:400;transform:scaleX(0.9880);">Font</div>
<div class="t" style="left:554.50px;top:222.20px;font-size:15.12px;color:#3b3a39;font-weight:400;transform:scaleX(1.0653);">Alignment</div>
<div class="t" style="left:748.55px;top:124.75px;font-size:19.19px;color:#222;font-weight:400;transform:scaleX(0.8833);">General</div>
<div class="t" style="left:802.30px;top:221.53px;font-size:15.55px;color:#3b3a39;font-weight:400;transform:scaleX(1.0481);">Number</div>
<div class="t" style="left:976.68px;top:160.05px;font-size:18.60px;color:#3b3a39;font-weight:400;transform:scaleX(0.9903);">Conditional</div>
<div class="t" style="left:969.52px;top:183.60px;font-size:18.90px;color:#3b3a39;font-weight:400;transform:scaleX(0.9774);">Formatting</div>
<div class="t" style="left:1081.60px;top:160.00px;font-size:18.90px;color:#3b3a39;font-weight:400;transform:scaleX(0.9293);">Format as</div>
<div class="t" style="left:1093.37px;top:183.60px;font-size:18.90px;color:#3b3a39;font-weight:400;transform:scaleX(0.8855);">Table</div>
<div class="t" style="left:1184.14px;top:160.00px;font-size:18.90px;color:#3b3a39;font-weight:400;transform:scaleX(0.9068);">Cell</div>
<div class="t" style="left:1167.66px;top:183.60px;font-size:18.90px;color:#3b3a39;font-weight:400;transform:scaleX(0.8724);">Styles</div>
<div class="t" style="left:1289.39px;top:110.07px;font-size:18.46px;color:#3b3a39;font-weight:400;transform:scaleX(0.9686);">Insert</div>
<div class="t" style="left:1289.79px;top:144.00px;font-size:18.90px;color:#3b3a39;font-weight:400;transform:scaleX(0.9340);">Delete</div>
<div class="t" style="left:1289.55px;top:178.42px;font-size:18.17px;color:#3b3a39;font-weight:400;">Format</div>
<div class="t" style="left:1297.66px;top:221.55px;font-size:15.41px;color:#3b3a39;font-weight:400;transform:scaleX(0.9584);">Cells</div>
<div class="t" style="left:1457.44px;top:160.49px;font-size:18.31px;color:#3b3a39;font-weight:400;transform:scaleX(1.0377);">Sort &amp;</div>
<div class="t" style="left:1455.63px;top:183.80px;font-size:18.90px;color:#3b3a39;font-weight:400;transform:scaleX(0.9065);">Filter</div>
<div class="t" style="left:1522.21px;top:160.49px;font-size:18.31px;color:#3b3a39;font-weight:400;transform:scaleX(1.0159);">Find &amp;</div>
<div class="t" style="left:1517.75px;top:183.80px;font-size:18.90px;color:#3b3a39;font-weight:400;transform:scaleX(0.8837);">Select</div>
<div class="t" style="left:1465.31px;top:221.46px;font-size:15.99px;color:#3b3a39;font-weight:400;transform:scaleX(1.0123);">Editing</div>
<div class="t" style="left:16.00px;top:264.28px;font-size:20.93px;color:#222;font-weight:400;transform:scaleX(0.9392);">A2</div>
<div class="t" style="left:390.39px;top:264.28px;font-size:20.93px;color:#222;font-weight:400;transform:scaleX(0.9621);">Book</div>
<div class="t" style="left:221.60px;top:318.82px;font-size:54.07px;color:#1d6b40;font-weight:400;transform:scaleX(0.9289);">A</div>
<div class="t" style="left:482.54px;top:318.82px;font-size:54.07px;color:#1d6b40;font-weight:400;transform:scaleX(0.8469);">B</div>
<div class="t" style="left:738.98px;top:318.82px;font-size:54.07px;color:#000;font-weight:400;transform:scaleX(0.8592);">C</div>
<div class="t" style="left:1261.50px;top:318.82px;font-size:54.07px;color:#000;font-weight:400;transform:scaleX(0.7160);">E</div>
<div class="t" style="left:1520.77px;top:318.82px;font-size:54.07px;color:#000;font-weight:400;transform:scaleX(0.7473);">F</div>
<div class="t" style="left:41.55px;top:395.31px;font-size:53.49px;color:#000;font-weight:400;transform:scaleX(0.8596);">1</div>
<div class="t" style="left:39.14px;top:473.31px;font-size:53.49px;color:#1d6b40;font-weight:400;transform:scaleX(1.0683);">2</div>
<div class="t" style="left:39.81px;top:551.31px;font-size:53.49px;color:#1d6b40;font-weight:400;transform:scaleX(1.0233);">3</div>
<div class="t" style="left:40.97px;top:629.31px;font-size:53.49px;color:#1d6b40;font-weight:400;transform:scaleX(0.9625);">4</div>
<div class="t" style="left:39.81px;top:707.31px;font-size:53.49px;color:#1d6b40;font-weight:400;transform:scaleX(1.0233);">5</div>
<div class="t" style="left:39.20px;top:785.31px;font-size:53.49px;color:#1d6b40;font-weight:400;transform:scaleX(1.0453);">6</div>
<div class="t" style="left:39.14px;top:863.31px;font-size:53.49px;color:#1d6b40;font-weight:400;transform:scaleX(1.0683);">7</div>
<div class="t" style="left:152.41px;top:403.93px;font-size:39.54px;color:#000;font-weight:700;transform:scaleX(0.9396);">Column 1</div>
<div class="t" style="left:411.80px;top:403.93px;font-size:39.54px;color:#000;font-weight:700;transform:scaleX(0.9473);">Column 2</div>
<div class="t" style="left:198.78px;top:483.82px;font-size:33.87px;color:#000;font-weight:400;">Book</div>
<div class="t" style="left:465.83px;top:483.82px;font-size:33.87px;color:#000;font-weight:400;transform:scaleX(1.0240);">Bed</div>
<div class="t" style="left:190.82px;top:561.82px;font-size:33.87px;color:#000;font-weight:400;transform:scaleX(1.0251);">Pencil</div>
<div class="t" style="left:449.70px;top:561.82px;font-size:33.87px;color:#000;font-weight:400;transform:scaleX(1.0332);">Pencil</div>
<div class="t" style="left:205.23px;top:639.82px;font-size:33.87px;color:#000;font-weight:400;transform:scaleX(1.0955);">Biro</div>
<div class="t" style="left:468.24px;top:639.82px;font-size:33.87px;color:#000;font-weight:400;transform:scaleX(0.9824);">Bag</div>
<div class="t" style="left:195.58px;top:717.82px;font-size:33.87px;color:#000;font-weight:400;transform:scaleX(1.0630);">Table</div>
<div class="t" style="left:458.67px;top:717.82px;font-size:33.87px;color:#000;font-weight:400;transform:scaleX(0.9717);">Desk</div>
<div class="t" style="left:194.63px;top:795.82px;font-size:33.87px;color:#000;font-weight:400;transform:scaleX(0.9866);">Chalk</div>
<div class="t" style="left:453.84px;top:795.82px;font-size:33.87px;color:#000;font-weight:400;transform:scaleX(0.9807);">Chalk</div>
<div class="t" style="left:174.31px;top:873.82px;font-size:33.87px;color:#000;font-weight:400;transform:scaleX(1.0299);">Envelop</div>
<div class="t" style="left:468.14px;top:873.82px;font-size:33.87px;color:#000;font-weight:400;transform:scaleX(1.0200);">File</div>
<div class="t" style="left:131.82px;top:955.86px;font-size:19.77px;color:#217346;font-weight:700;transform:scaleX(0.9851);">Sheet1</div>
<div class="t" style="left:11.40px;top:994.51px;font-size:15.70px;color:#444;font-weight:400;transform:scaleX(0.9521);">Ready</div>
<div class="t" style="left:156.90px;top:994.51px;font-size:15.70px;color:#444;font-weight:400;transform:scaleX(0.9809);">Accessibility: Good to go</div>
<div class="t" style="left:1111.42px;top:993.89px;font-size:16.42px;color:#444;font-weight:400;transform:scaleX(0.9517);">Count: 12</div>
<div class="t" style="left:1598.42px;top:993.89px;font-size:16.42px;color:#444;font-weight:400;transform:scaleX(0.9545);">270%</div>
<div style="position:absolute;left:2px;top:929px;width:106px;height:22px;overflow:hidden"><div class="t" style="left:-2px;margin-left:39.11px;top:12.31px;font-size:53.49px;color:#000;font-weight:400;transform:scaleX(0.9944);">8</div></div>
<div style="position:absolute;left:967px;top:213px;width:292px;height:503px;background:#fff;border:1px solid #c8c6c4;box-sizing:border-box;box-shadow:2px 2px 4px rgba(0,0,0,0.13)"></div>
<div style="position:absolute;left:1035px;top:359px;width:222px;height:1px;background:#e1dfdd"></div>
<div style="position:absolute;left:971px;top:583px;width:286px;height:39px;background:#d2d0ce"></div>
<svg style="left:0;top:0" width="1" height="1"><rect x="993.8" y="235.4" width="40.2" height="30.6" fill="#fafafa" stroke="#444" stroke-width="1.6"/><path d="M1004.1,235.4 V266.0 M1023.8,235.4 V266.0 M993.8,245.7 H1034.0 M993.8,256.1 H1034.0 " stroke="#444" stroke-width="1.3" fill="none"/><path d="M1004.1,256.1 V245.7 H1023.8 V254" fill="#f8d98b" stroke="#e07b00" stroke-width="1.8"/><rect x="1011.8" y="254.8" width="25" height="18.8" fill="#fafafa" stroke="#444" stroke-width="1.6"/><path d="M1027.5,258.5 L1019.5,262.3 L1027.5,266 M1019.5,269.2 H1027.5" fill="none" stroke="#444" stroke-width="1.3"/><rect x="993.8" y="307.4" width="40.2" height="30.8" fill="#fafafa" stroke="#444" stroke-width="1.6"/><path d="M1004.1,307.4 V338.2 M1023.8,307.4 V338.2 M993.8,318.0 H1034.0 M993.8,328.2 H1034.0 " stroke="#444" stroke-width="1.3" fill="none"/><rect x="1004.1" y="307.4" width="19.7" height="30.8" fill="#f8d98b" stroke="#e07b00" stroke-width="1.8"/><path d="M1013.9,324 V310.5 M1008.8,315.5 L1013.9,310.5 L1019,315.5" fill="none" stroke="#444" stroke-width="1.4"/><rect x="1011.8" y="327" width="25" height="18.8" fill="#fafafa" stroke="#444" stroke-width="1.6"/><rect x="993.9" y="382.6" width="40.0" height="31.0" fill="#fafafa" stroke="#444" stroke-width="1.6"/><path d="M1000.8,382.6 V413.6 M1027.5,382.6 V413.6 M993.9,392.7 H1033.9 M993.9,403.3 H1033.9 " stroke="#444" stroke-width="1.3" fill="none"/><rect x="1000.8" y="382.6" width="12.5" height="10.1" fill="#8ec2ee" stroke="#1e6fb5" stroke-width="1.6"/><rect x="1000.8" y="392.7" width="4.7" height="10.6" fill="#8ec2ee" stroke="#1e6fb5" stroke-width="1.6"/><rect x="1000.8" y="403.3" width="9.6" height="10.3" fill="#8ec2ee" stroke="#1e6fb5" stroke-width="1.6"/><rect x="993.9" y="454.7" width="40.0" height="31.2" fill="#fafafa" stroke="#444" stroke-width="1.6"/><path d="M1000.8,454.7 V485.9 M1027.5,454.7 V485.9 M993.9,464.8 H1033.9 M993.9,475.6 H1033.9 " stroke="#444" stroke-width="1.3" fill="none"/><rect x="1000.8" y="454.7" width="26.7" height="10.1" fill="#8ec2ee" stroke="#1e6fb5" stroke-width="1.6"/><rect x="1000.8" y="464.8" width="26.7" height="10.8" fill="#f8d98b" stroke="#e07b00" stroke-width="1.4"/><rect x="1000.8" y="475.6" width="26.7" height="10.3" fill="#f4a3ab" stroke="#d8262e" stroke-width="1.6"/><rect x="993.9" y="526.1" width="40.0" height="31.9" fill="#fafafa" stroke="#444" stroke-width="1.6"/><path d="M1000.8,526.1 V558.0 M1027.5,526.1 V558.0 M993.9,536.7 H1033.9 M993.9,547.9 H1033.9 " stroke="#444" stroke-width="1.3" fill="none"/><circle cx="1005.5" cy="531.4" r="2.3" fill="#1e8bcd"/><path d="M1017.6,531.4 H1025" stroke="#666" stroke-width="1.3"/><circle cx="1005.5" cy="542.3" r="2.3" fill="#e8333a"/><path d="M1017.6,542.3 H1025" stroke="#666" stroke-width="1.3"/><circle cx="1005.5" cy="553.0" r="2.3" fill="#1e8bcd"/><path d="M1017.6,553.0 H1025" stroke="#666" stroke-width="1.3"/><rect x="987.8" y="593.2" width="22.4" height="19.4" fill="#fafafa" stroke="#444" stroke-width="1.6"/><path d="M994.0,593.2 V612.6 M1004.4,593.2 V612.6 M987.8,598.5 H1010.2 M987.8,607.0 H1010.2 " stroke="#444" stroke-width="1.3" fill="none"/><rect x="994" y="598.5" width="10.4" height="8.5" fill="#f8d98b" stroke="#e07b00" stroke-width="1.8"/><rect x="987.8" y="637.0" width="22.4" height="19.6" fill="#fafafa" stroke="#444" stroke-width="1.6"/><path d="M994.0,637.0 V656.6 M1004.4,637.0 V656.6 M987.8,642.0 H1010.2 M987.8,651.5 H1010.2 " stroke="#444" stroke-width="1.3" fill="none"/><rect x="994" y="642" width="10.4" height="9.5" fill="#f8d98b" stroke="#e07b00" stroke-width="1.8"/><path d="M1006.5,644.5 L1011.5,649.5 L1001.7,659.3 L996.7,654.3 Z" fill="#fafafa" stroke="#fff" stroke-width="3.5"/><path d="M1006.5,644.5 L1011.5,649.5 L1001.7,659.3 L996.7,654.3 Z" fill="#fafafa" stroke="#a03ab4" stroke-width="1.6"/><path d="M999.2,651.8 L1004.2,656.8 L1001.7,659.3 L996.7,654.3 Z" fill="#d8a6e6" stroke="#a03ab4" stroke-width="1.4"/><path d="M987.8,697 V679.5 H1007.5" fill="none" stroke="#444" stroke-width="1.4"/><rect x="990.5" y="682.2" width="19.7" height="18.6" fill="#fafafa" stroke="#444" stroke-width="1.6"/><path d="M995.5,682.2 V700.8 M1005.2,682.2 V700.8 M990.5,687.5 H1010.2 M990.5,695.5 H1010.2 " stroke="#444" stroke-width="1.3" fill="none"/><rect x="995.5" y="687.5" width="9.7" height="8" fill="#f8d98b" stroke="#e07b00" stroke-width="1.8"/></svg>
<div class="t" style="left:1047.46px;top:245.78px;font-size:19.04px;color:#222;font-weight:700;transform:scaleX(0.9240);"><u>H</u>ighlight Cells Rules</div>
<div class="t" style="left:1048.42px;top:318.74px;font-size:18.02px;color:#222;font-weight:700;transform:scaleX(1.0129);"><u>T</u>op/Bottom Rules</div>
<div class="t" style="left:1047.45px;top:393.14px;font-size:18.02px;color:#222;font-weight:700;transform:scaleX(0.9845);"><u>D</u>ata Bars</div>
<div class="t" style="left:1048.03px;top:465.45px;font-size:18.60px;color:#222;font-weight:700;transform:scaleX(0.9032);">Color <u>S</u>cales</div>
<div class="t" style="left:1047.57px;top:536.41px;font-size:19.48px;color:#222;font-weight:700;transform:scaleX(0.8955);"><u>I</u>con Sets</div>
<div class="t" style="left:1023.45px;top:594.85px;font-size:18.60px;color:#222;font-weight:400;transform:scaleX(0.9093);"><u>N</u>ew Rule...</div>
<div class="t" style="left:1023.98px;top:639.07px;font-size:18.46px;color:#222;font-weight:400;transform:scaleX(0.8906);"><u>C</u>lear Rules</div>
<div class="t" style="left:1023.43px;top:683.05px;font-size:18.60px;color:#222;font-weight:400;transform:scaleX(0.9185);">Manage <u>R</u>ules...</div>
<svg style="left:0;top:0" width="1" height="1"><polyline points="1237.0,243.8 1245.0,250.6 1237.0,257.4" fill="none" stroke="#444" stroke-width="1.6"/></svg>
<svg style="left:0;top:0" width="1" height="1"><polyline points="1237.0,316.0 1245.0,323.0 1237.0,330.0" fill="none" stroke="#444" stroke-width="1.6"/></svg>
<svg style="left:0;top:0" width="1" height="1"><polyline points="1237.0,390.4 1245.0,397.4 1237.0,404.4" fill="none" stroke="#444" stroke-width="1.6"/></svg>
<svg style="left:0;top:0" width="1" height="1"><polyline points="1237.0,462.7 1245.0,469.9 1237.0,477.0" fill="none" stroke="#444" stroke-width="1.6"/></svg>
<svg style="left:0;top:0" width="1" height="1"><polyline points="1237.0,534.7 1245.0,541.8 1237.0,548.9" fill="none" stroke="#444" stroke-width="1.6"/></svg>
<svg style="left:0;top:0" width="1" height="1"><polyline points="1237.0,640.0 1245.0,646.6 1237.0,653.3" fill="none" stroke="#444" stroke-width="1.6"/></svg>
<svg style="left:0;top:0" width="1" height="1"><path fill-rule="evenodd" fill="#000" d="M974.0,579.5 H1255.5 A5.5,5.5 0 0 1 1261.0,585.0 V620.2 A5.5,5.5 0 0 1 1255.5,625.7 H974.0 A5.5,5.5 0 0 1 968.5,620.2 V585.0 A5.5,5.5 0 0 1 974.0,579.5 Z M973.5,584.5 H1256.0 V620.7 H973.5 Z"/></svg>
<svg style="left:0;top:0" width="1" height="1"><line x1="815.4" y1="552" x2="965" y2="228.5" stroke="#000" stroke-width="5.5"/><polygon points="971.8,209.1 951.6,231.2 963,232 968.5,239.5" fill="#000"/><line x1="1318.3" y1="774.8" x2="1264" y2="640" stroke="#000" stroke-width="5.5"/><polygon points="1258.6,623 1278,644.6 1266,645 1259.6,651" fill="#000"/></svg>
<div class="t" style="left:698.82px;top:554.96px;font-size:38.08px;color:#000;font-weight:700;transform:scaleX(0.9719);">Conditional</div>
<div class="t" style="left:700.12px;top:602.15px;font-size:39.39px;color:#000;font-weight:700;transform:scaleX(0.9676);">Formatting</div>
<div class="t" style="left:1249.11px;top:775.25px;font-size:39.39px;color:#000;font-weight:700;transform:scaleX(0.9728);">New Rule</div>
<svg style="left:0;top:0" width="1" height="1"><path d="M1118.5,626 L1118.5,647.8 L1123.6,643.6 L1127.3,650.8 L1131,649.2 L1128.3,643 L1135.3,642.8 Z" fill="#fff" stroke="#111" stroke-width="1.1"/></svg>
<div class="t" style="left:1015.95px;top:328.59px;font-size:15.07px;color:#555;font-weight:400;transform:scaleX(0.9290);">10</div>
</body></html>
